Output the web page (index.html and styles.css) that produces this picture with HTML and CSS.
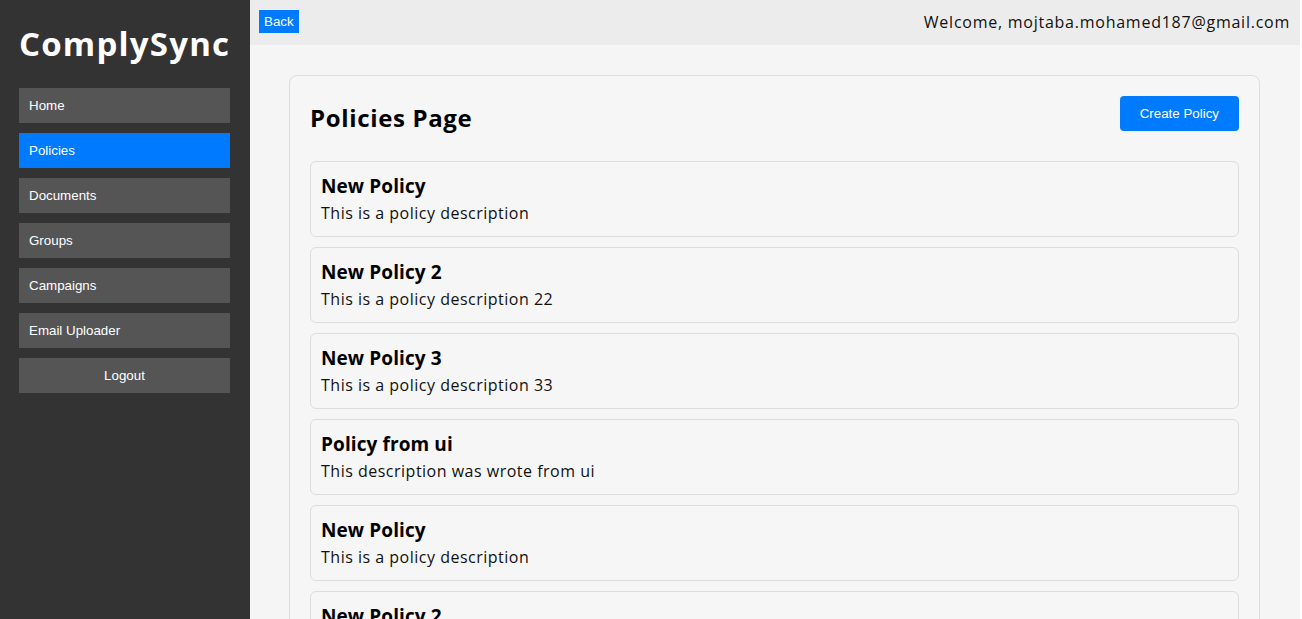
FILE: index.html
```html
<!DOCTYPE html>
<html lang="en">
<head>
<meta charset="utf-8">
<title>ComplySync - Policies</title>
<link rel="stylesheet" href="styles.css">
</head>
<body>
<div class="app">
  <aside class="sidebar">
    <h1 class="logo">ComplySync</h1>
    <nav class="nav">
      <button class="nav-item">Home</button>
      <button class="nav-item active">Policies</button>
      <button class="nav-item">Documents</button>
      <button class="nav-item">Groups</button>
      <button class="nav-item">Campaigns</button>
      <button class="nav-item">Email Uploader</button>
      <button class="nav-item logout">Logout</button>
    </nav>
  </aside>
  <div class="main">
    <header class="topbar">
      <button class="back-btn">Back</button>
      <span class="welcome">Welcome, mojtaba.mohamed187@gmail.com</span>
    </header>
    <section class="content">
      <div class="card">
        <div class="card-head">
          <h2 class="page-title">Policies Page</h2>
          <button class="create-btn">Create Policy</button>
        </div>
        <ul class="policy-list">
          <li class="policy"><h3 class="policy-title">New Policy</h3><p class="policy-desc">This is a policy description</p></li>
          <li class="policy"><h3 class="policy-title">New Policy 2</h3><p class="policy-desc">This is a policy description 22</p></li>
          <li class="policy"><h3 class="policy-title">New Policy 3</h3><p class="policy-desc">This is a policy description 33</p></li>
          <li class="policy"><h3 class="policy-title">Policy from ui</h3><p class="policy-desc">This description was wrote from ui</p></li>
          <li class="policy"><h3 class="policy-title">New Policy</h3><p class="policy-desc">This is a policy description</p></li>
          <li class="policy"><h3 class="policy-title">New Policy 2</h3><p class="policy-desc">This is a policy description 22</p></li>
        </ul>
      </div>
    </section>
  </div>
</div>
</body>
</html>
```

FILE: styles.css
```css
* { box-sizing: border-box; }
html, body { margin: 0; padding: 0; height: 100%; }
body {
  background: #ffffff;
  font-family: "Open Sans", "Liberation Sans", sans-serif;
  color: #111;
  overflow: hidden;
}
.app {
  display: flex;
  height: 619px;
  margin-right: 2px;
}
.sidebar {
  width: 250px;
  flex: 0 0 250px;
  background: #333333;
  padding: 0 20px 0 19px;
}
.logo {
  margin: 0;
  height: 88px;
  display: flex;
  align-items: center;
  padding-bottom: 1px;
  color: #fff;
  font-family: "Open Sans", sans-serif;
  font-weight: 700;
  font-size: 33px;
  letter-spacing: 1.2px;
}
.nav {
  display: flex;
  flex-direction: column;
  gap: 10px;
}
.nav-item {
  display: block;
  width: 100%;
  height: 35px;
  border: none;
  background: #555555;
  color: #fff;
  text-align: left;
  padding: 0 10px;
  font-family: "Liberation Sans", Arial, sans-serif;
  font-size: 13.33px;
}
.nav-item.active { background: #007bff; }
.nav-item.logout { text-align: center; }
.main {
  flex: 1;
  background: #f5f5f5;
  display: flex;
  flex-direction: column;
  min-width: 0;
}
.topbar {
  height: 45px;
  background: #ececec;
  display: flex;
  align-items: center;
  justify-content: space-between;
  padding: 0 10px 2px 9px;
}
.back-btn {
  height: 23px;
  border: none;
  background: #007bff;
  color: #fff;
  padding: 0 5px;
  font-family: "Liberation Sans", Arial, sans-serif;
  font-size: 13.33px;
}
.welcome {
  font-size: 16px;
  letter-spacing: 0.75px;
  color: #111;
}
.content {
  flex: 1;
  padding: 30px 0 0 39px;
  overflow: hidden;
}
.card {
  width: 971px;
  background: #f6f6f6;
  border: 1px solid #dddddd;
  border-radius: 8px;
  padding: 20px;
}
.card-head {
  display: flex;
  justify-content: space-between;
  align-items: center;
  height: 35px;
  margin-bottom: 30px;
}
.page-title {
  margin: 0;
  font-size: 24px;
  font-weight: 700;
  letter-spacing: 0.65px;
  color: #000;
  padding-top: 8px;
}
.create-btn {
  height: 35px;
  padding: 0 20px;
  border: none;
  border-radius: 4px;
  background: #007bff;
  color: #fff;
  font-family: "Liberation Sans", Arial, sans-serif;
  font-size: 13.33px;
}
.policy-list {
  list-style: none;
  margin: 0;
  padding: 0;
  display: flex;
  flex-direction: column;
  gap: 10px;
}
.policy {
  border: 1px solid #dddddd;
  border-radius: 6px;
  padding: 10px;
  background: #f6f6f6;
}
.policy-title {
  margin: 0;
  height: 28px;
  line-height: 28px;
  font-size: 19px;
  font-weight: 700;
  letter-spacing: 0.1px;
  color: #000;
}
.policy-desc {
  margin: 0;
  height: 26px;
  line-height: 26px;
  font-size: 16px;
  letter-spacing: 0.5px;
  color: #111;
}
```
